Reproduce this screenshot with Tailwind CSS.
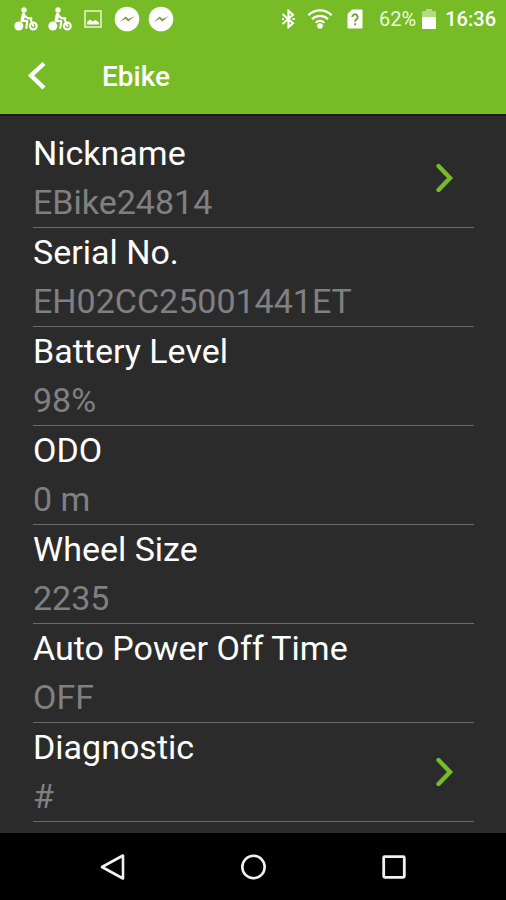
<!DOCTYPE html>
<html lang="en">
<head>
<meta charset="utf-8">
<meta name="viewport" content="width=device-width, initial-scale=1">
<title>Ebike</title>
<script src="https://cdn.jsdelivr.net/npm/@tailwindcss/browser@4"></script>
</head>
<body class="flex min-h-screen flex-col bg-[#2b2b2b] font-['Roboto',sans-serif] text-white">

<svg class="hidden" aria-hidden="true">
  <symbol id="cyclist" viewBox="0 0 24 24">
    <circle cx="10" cy="3" r="2.700" fill="#fff"/>
    <circle cx="4.800" cy="19" r="4.500" fill="#fff"/>
    <circle cx="19.300" cy="19" r="3.400" fill="none" stroke="#fff" stroke-width="2.200"/>
    <path d="M9.500 7.500 8.300 13.500" fill="none" stroke="#fff" stroke-width="3.600" stroke-linecap="round"/>
    <path d="M8.300 14h5l-1 7M10 8l3.500 3.300h4M16.300 11.500l3 7.500" fill="none" stroke="#fff" stroke-width="2" stroke-linecap="round" stroke-linejoin="round"/>
  </symbol>
  <symbol id="messenger" viewBox="0 0 26 26">
    <circle cx="13" cy="13" r="12.300" fill="#fff"/>
    <path d="M5.500 16 11.800 10.500l2.700 2.500 6.300-3-6.500 5.600-2.800-2.500z" fill="#7c9c4c"/>
  </symbol>
  <symbol id="chevron" viewBox="0 0 20 32">
    <path d="M3.500 4 15 16 3.500 28" fill="none" stroke="#76bc29" stroke-width="4.400" stroke-linecap="round" stroke-linejoin="miter"/>
  </symbol>
</svg>

<header class="bg-[#77bc27]">
  <div class="flex h-[38px] items-center justify-between pr-[10px] pl-[14px]">
    <div class="flex items-center">
      <svg class="h-6 w-6" role="img" aria-label="Ride active"><use href="#cyclist"/></svg>
      <svg class="ml-[10px] h-6 w-6" role="img" aria-label="Ride active"><use href="#cyclist"/></svg>
      <svg class="ml-3 h-[18px] w-[18px]" viewBox="0 0 18 18" role="img" aria-label="Screenshot">
        <rect x="1" y="1" width="16" height="16" fill="none" stroke="#e3f2c8" stroke-width="1.600"/>
        <path d="M3 14.500V12l3-2.500 2.500 2 3-1.500 3.500 2.500v2z" fill="#fff"/>
      </svg>
      <svg class="ml-3 h-[26px] w-[26px]" role="img" aria-label="Messenger"><use href="#messenger"/></svg>
      <svg class="ml-2 h-[26px] w-[26px]" role="img" aria-label="Messenger"><use href="#messenger"/></svg>
    </div>
    <div class="flex items-center">
      <svg class="h-5 w-[14px]" viewBox="0 0 14 20" role="img" aria-label="Bluetooth">
        <path d="M1.500 5 12 14.300 7.500 18.200V1.800L12 5.700 1.500 15" fill="none" stroke="#fff" stroke-width="2.100" stroke-linejoin="miter"/>
        <path d="M1 10h2M11.500 10h2.300" stroke="#fff" stroke-width="2"/>
      </svg>
      <svg class="ml-3 h-5 w-[26px]" viewBox="0 0 26 20" role="img" aria-label="Wi-Fi">
        <path d="M1.300 6.300a16.500 16.500 0 0 1 23.400 0M5 10.200a11.300 11.300 0 0 1 16 0M8.700 13.700a6.100 6.100 0 0 1 8.600 0" fill="none" stroke="#fff" stroke-width="2.300"/>
        <circle cx="13" cy="17" r="2.800" fill="#fff"/>
      </svg>
      <svg class="ml-[14px] h-5 w-4" viewBox="0 0 16 20" role="img" aria-label="Unknown SIM">
        <path d="M5 .500h9.500a1 1 0 0 1 1 1v17a1 1 0 0 1-1 1h-13a1 1 0 0 1-1-1V5z" fill="#fff"/>
        <path d="M5.300 8a2.700 2.700 0 1 1 4.300 2.200c-1 .8-1.500 1.100-1.500 2.500M8.100 14.300v2" fill="none" stroke="#69a428" stroke-width="1.900"/>
      </svg>
      <span class="ml-4 text-[20px] leading-6 text-[#f0fadf]">62%</span>
      <svg class="ml-1.5 h-5 w-[14px]" viewBox="0 0 14 20" role="img" aria-label="Battery">
        <path d="M4 0h6v2h3a1 1 0 0 1 1 1v5H0V3a1 1 0 0 1 1-1h3z" fill="#b3da80"/>
        <path d="M0 8h14v11a1 1 0 0 1-1 1H1a1 1 0 0 1-1-1z" fill="#fff"/>
      </svg>
      <time class="ml-[9px] text-[20px] leading-6 font-medium">16:36</time>
    </div>
  </div>
  <div class="flex h-[76px] items-center pt-0.5 pl-[27px]">
    <button type="button" aria-label="Back" class="h-8 w-5">
      <svg class="h-8 w-5" viewBox="0 0 20 32"><path d="M17 2.500 4 14.500l13 12.500" fill="none" stroke="#fff" stroke-width="4.400"/></svg>
    </button>
    <h1 class="ml-[55px] text-[28px] leading-8 font-medium">Ebike</h1>
  </div>
</header>

<main class="grow border-t-2 border-[#1c1a1a] pt-[13px] pr-8 pb-[11px] pl-[33px] text-[34px] leading-[49px]">
  <ul class="text-[#808082]">
    <li class="border-b border-[#6a6a6a]">
      <button type="button" class="flex w-full items-center justify-between pr-[19px] text-left">
        <span><span class="block text-white">Nickname</span><span class="block">EBike24814</span></span>
        <svg class="h-8 w-5" aria-hidden="true"><use href="#chevron"/></svg>
      </button>
    </li>
    <li class="border-b border-[#6a6a6a]"><span class="block text-white">Serial No.</span><span class="block">EH02CC25001441ET</span></li>
    <li class="border-b border-[#6a6a6a]"><span class="block text-white">Battery Level</span><span class="block">98%</span></li>
    <li class="border-b border-[#6a6a6a]"><span class="block text-white">ODO</span><span class="block">0 m</span></li>
    <li class="border-b border-[#6a6a6a]"><span class="block text-white">Wheel Size</span><span class="block">2235</span></li>
    <li class="border-b border-[#6a6a6a]"><span class="block text-white">Auto Power Off Time</span><span class="block">OFF</span></li>
    <li class="border-b border-[#6a6a6a]">
      <button type="button" class="flex w-full items-center justify-between pr-[19px] text-left">
        <span><span class="block text-white">Diagnostic</span><span class="block">#</span></span>
        <svg class="h-8 w-5" aria-hidden="true"><use href="#chevron"/></svg>
      </button>
    </li>
  </ul>
</main>

<nav aria-label="System" class="flex h-[67px] items-center justify-center gap-[113px] bg-black">
  <button type="button" aria-label="Back" class="h-7 w-7">
    <svg class="h-7 w-7" viewBox="0 0 28 28" fill="none" stroke="#f2f2f2" stroke-width="2.600"><path d="M25 2.500v23L4 14z" stroke-linejoin="round"/></svg>
  </button>
  <button type="button" aria-label="Home" class="h-7 w-7">
    <svg class="h-7 w-7" viewBox="0 0 28 28" fill="none" stroke="#f2f2f2" stroke-width="2.600"><circle cx="14.500" cy="14" r="11.200"/></svg>
  </button>
  <button type="button" aria-label="Recent apps" class="h-7 w-7">
    <svg class="h-7 w-7" viewBox="0 0 28 28" fill="none" stroke="#f2f2f2" stroke-width="2.800"><rect x="3.700" y="3.700" width="20.600" height="20.600" rx="1"/></svg>
  </button>
</nav>
</body>
</html>
